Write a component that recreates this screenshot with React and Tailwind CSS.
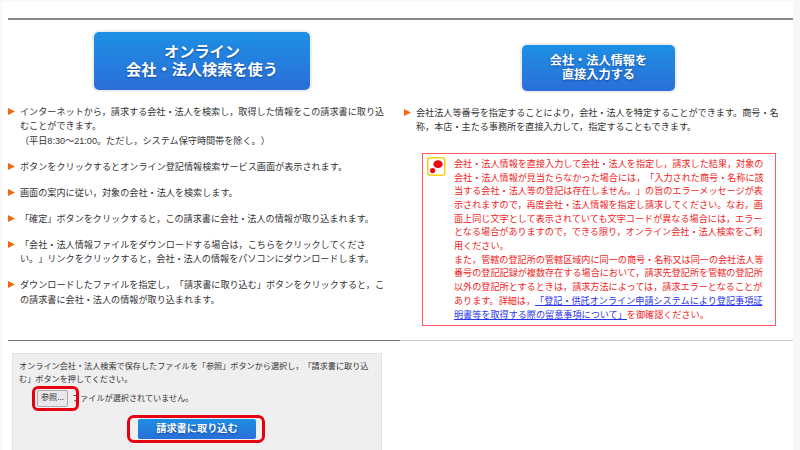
const FONT = "font-['Liberation_Sans','Noto_Sans_CJK_JP',sans-serif]";

const leftItems = [
  <>インターネットから，請求する会社・法人を検索し，取得した情報をこの請求書に取り込むことができます。<br />（平日8:30～21:00。ただし，システム保守時間帯を除く。）</>,
  <>ボタンをクリックするとオンライン登記情報検索サービス画面が表示されます。</>,
  <>画面の案内に従い，対象の会社・法人を検索します。</>,
  <>「確定」ボタンをクリックすると，この請求書に会社・法人の情報が取り込まれます。</>,
  <>「会社・法人情報ファイルをダウンロードする場合は，こちらをクリックしてください。」リンクをクリックすると，会社・法人の情報をパソコンにダウンロードします。</>,
  <>ダウンロードしたファイルを指定し，「請求書に取り込む」ボタンをクリックすると，この請求書に会社・法人の情報が取り込まれます。</>,
];

const BlueButton = ({ className, children }) => (
  <div className="rounded-[7px] border-2 border-[#eeeeee] bg-white">
    <div className={`flex flex-col items-center justify-center rounded-[5px] bg-gradient-to-b from-[#1c90e4] to-[#2a6ed8] font-bold text-white [text-shadow:0_1px_2px_rgba(0,40,110,0.6)] ${className}`}>
      {children}
    </div>
  </div>
);

const Bullet = ({ children }) => (
  <li className="flex">
    <svg width="12" height="9" viewBox="0 0 12 9" className="mt-[3px] shrink-0">
      <polygon points="0,0 7,3.5 0,7" fill="#f26a0f" />
    </svg>
    <div>{children}</div>
  </li>
);

const App = () => {
  return (
    <div className={`h-[450px] w-[800px] overflow-hidden bg-[#f8f8f8] pl-[2px] pr-[7px] pt-px text-[9.12px] leading-[14.4px] text-[#333] [text-spacing-trim:space-all] ${FONT}`}>
      <div className="h-[449px] overflow-hidden bg-white pl-[6px]">
        <div className="pt-[17px]">
          <div className="h-[2px] bg-[#888]" />
        </div>

        <div className="grid h-[320px] grid-cols-[392px_1fr]">
          {/* left column */}
          <div>
            <div className="mt-[10px] flex justify-center pr-[4px]">
              <BlueButton className="h-[58px] w-[216px] text-[15.2px] leading-[18px]">
                <span>オンライン</span>
                <span>会社・法人検索を使う</span>
              </BlueButton>
            </div>
            <ul className="mt-[13px] flex w-[378px] flex-col gap-[11.6px]">
              {leftItems.map((item, i) => (
                <Bullet key={i}>{item}</Bullet>
              ))}
            </ul>
          </div>

          {/* right column */}
          <div className="pl-[4px]">
            <div className="mt-[23px] flex justify-center pl-[1px] pr-[1px]">
              <BlueButton className="h-[46px] w-[153px] text-[12.2px] leading-[14px]">
                <span>会社・法人情報を</span>
                <span>直接入力する</span>
              </BlueButton>
            </div>
            <ul className="mt-[13px] w-[378px]">
              <Bullet>会社法人等番号を指定することにより，会社・法人を特定することができます。商号・名称，本店・主たる事務所を直接入力して，指定することもできます。</Bullet>
            </ul>
            <div className="ml-[18px] mt-[18px] flex h-[173px] w-[354px] border border-[#ff5a64] pl-[4px] pt-[3px] text-[#f01c24] leading-[13.7px]">
              <svg width="19" height="20" viewBox="0 0 19 20" className="shrink-0">
                <rect x="0.75" y="0.75" width="17" height="17.5" rx="2.5" fill="#fff" stroke="#fbcf14" strokeWidth="1.5" />
                <ellipse cx="11" cy="7.2" rx="4.6" ry="3.9" fill="#ea0a12" />
                <circle cx="5.6" cy="13.6" r="2.6" fill="#ea0a12" />
              </svg>
              <div className="ml-[8px] w-[311px] pt-[1px]">
                会社・法人情報を直接入力して会社・法人を指定し，請求した結果，対象の会社・法人情報が見当たらなかった場合には，「入力された商号・名称に該当する会社・法人等の登記は存在しません。」の旨のエラーメッセージが表示されますので，再度会社・法人情報を指定し請求してください。なお，画面上同じ文字として表示されていても文字コードが異なる場合には，エラーとなる場合がありますので，できる限り，オンライン会社・法人検索をご利用ください。
                <br />
                また，管轄の登記所の管轄区域内に同一の商号・名称又は同一の会社法人等番号の登記記録が複数存在する場合において，請求先登記所を管轄の登記所以外の登記所とするときは，請求方法によっては，請求エラーとなることがあります。詳細は，
                <a href="#" className="text-[#2a35e8] underline">「登記・供託オンライン申請システムにより登記事項証明書等を取得する際の留意事項について」</a>
                を御確認ください。
              </div>
            </div>
          </div>
        </div>

        {/* divider */}
        <div className="grid grid-cols-[392px_1fr]">
          <div className="h-px bg-[#777]" />
          <div className="h-px bg-[#ccc]" />
        </div>

        {/* upload panel */}
        <div className="ml-[4px] mt-[12px] h-[120px] w-[370px] border border-[#e2e2e2] bg-[#efefef] pl-[6px] pt-[6px] text-[8.15px] leading-[13.4px]">
          <p className="w-[353px]">オンライン会社・法人検索で保存したファイルを「参照」ボタンから選択し，「請求書に取り込む」ボタンを押してください。</p>
          <div className="relative ml-[18px] mt-[3px] flex items-center">
            <button className="h-[17px] w-[31px] rounded-[2px] border border-[#aaa] bg-[#e9e9ed] text-[8.15px] leading-none text-[#333]">参照...</button>
            <span className="ml-[4px]">ファイルが選択されていません。</span>
            <div className="absolute left-[-5px] top-[-4px] h-[25px] w-[47px] rounded-[6px] border-[3px] border-[#e60012]" />
          </div>
          <div className="relative mt-[12px] ml-[119px] w-[118px]">
            <div className="flex h-[20px] items-center justify-center rounded-[2px] bg-gradient-to-b from-[#1c90e4] to-[#2a6ed8] text-[10.2px] font-bold text-white [text-shadow:0_1px_2px_rgba(0,40,110,0.6)]">請求書に取り込む</div>
            <div className="absolute left-[-11px] top-[-4px] h-[28px] w-[138px] rounded-[7px] border-[3px] border-[#e60012]" />
          </div>
        </div>
      </div>
    </div>
  );
};

export default App;
